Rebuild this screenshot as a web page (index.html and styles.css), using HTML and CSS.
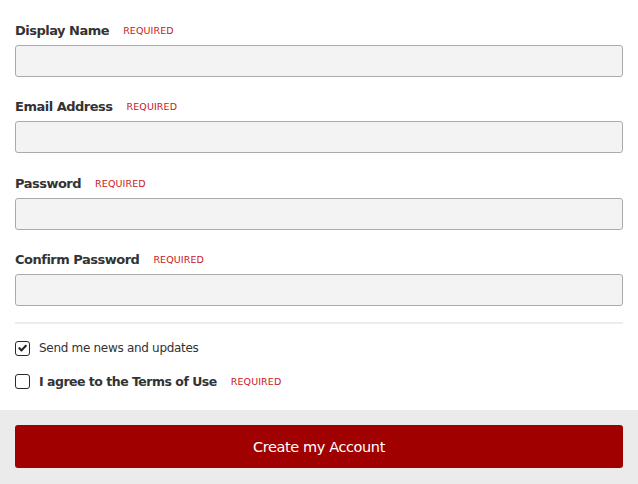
FILE: index.html
```html
<!DOCTYPE html>
<html>
<head>
<meta charset="utf-8">
<link rel="stylesheet" href="styles.css">
</head>
<body>
<form class="signup">
  <div class="fields">
    <div class="field">
      <div class="label-row"><span class="label">Display Name</span><span class="req">REQUIRED</span></div>
      <input class="input" type="text">
    </div>
    <div class="field">
      <div class="label-row"><span class="label">Email Address</span><span class="req">REQUIRED</span></div>
      <input class="input" type="text">
    </div>
    <div class="field shift">
      <div class="label-row"><span class="label">Password</span><span class="req">REQUIRED</span></div>
      <input class="input" type="password">
    </div>
    <div class="field">
      <div class="label-row"><span class="label">Confirm Password</span><span class="req">REQUIRED</span></div>
      <input class="input" type="password">
    </div>
    <hr class="sep">
    <div class="check-row">
      <span class="box checked"><svg viewBox="0 0 14 14" width="14" height="14"><path d="M3.6 7.2 L6 9.6 L10.6 4.6" fill="none" stroke="#222" stroke-width="2.2" stroke-linecap="round" stroke-linejoin="round"/></svg></span>
      <span class="check-text">Send me news and updates</span>
    </div>
    <div class="check-row last">
      <span class="box"></span>
      <span class="check-text bold">I agree to the Terms of Use</span><span class="req">REQUIRED</span>
    </div>
  </div>
  <div class="footer">
    <button class="submit" type="button">Create my Account</button>
  </div>
</form>
</body>
</html>
```
FILE: styles.css
```css
html, body {
  margin: 0;
  padding: 0;
  background: #fff;
  font-family: "DejaVu Sans", Verdana, sans-serif;
  color: #333;
}
.signup {
  width: 638px;
}
.fields {
  padding: 20px 15px 0 15px;
}
.field {
  margin-bottom: 19px;
}
.field.shift {
  padding-top: 1px;
}
.label-row {
  height: 20px;
  display: flex;
  align-items: center;
  margin-bottom: 5px;
}
.label {
  font-weight: bold;
  font-size: 13px;
  color: #333;
  letter-spacing: -0.5px;
}
.req {
  font-size: 9.5px;
  color: #c8171e;
  margin-left: 14px;
  letter-spacing: 0.1px;
}
.input {
  display: block;
  box-sizing: border-box;
  width: 100%;
  height: 32px;
  margin: 0;
  border: 1px solid #aaa;
  border-radius: 3px;
  background: #f3f3f3;
}
.sep {
  border: 0;
  height: 2px;
  background: #ececec;
  margin: -3px 0 16px 0;
}
.check-row {
  display: flex;
  align-items: center;
  height: 16px;
  margin-bottom: 17px;
}
.check-row.last {
  margin-bottom: 21px;
}
.box {
  box-sizing: border-box;
  width: 15px;
  height: 15px;
  border: 1.5px solid #2a2a2a;
  border-radius: 3px;
  display: flex;
  align-items: center;
  justify-content: center;
  margin-right: 9px;
}
.box svg {
  display: block;
}
.check-text {
  font-size: 12px;
  color: #333;
  letter-spacing: -0.3px;
}
.check-text.bold {
  font-weight: bold;
  font-size: 12.5px;
  letter-spacing: -0.5px;
}
.check-row .req {
  margin-left: 14px;
}
.footer {
  background: #ebebeb;
  padding: 15px 15px 16px 15px;
}
.submit {
  display: block;
  width: 100%;
  height: 43px;
  border: 0;
  border-radius: 3px;
  background: #a10000;
  color: #fff;
  font-family: "DejaVu Sans", Verdana, sans-serif;
  font-size: 14.5px;
  letter-spacing: -0.4px;
}
```
